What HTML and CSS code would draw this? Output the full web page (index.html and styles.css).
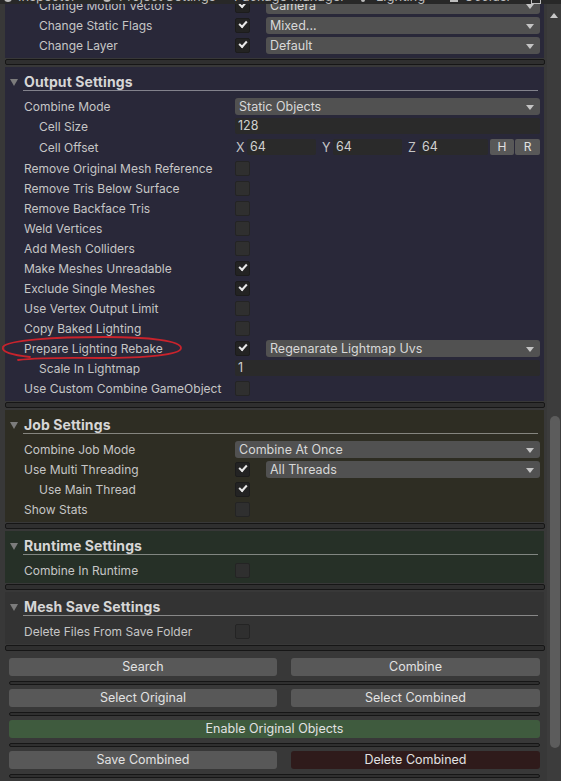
FILE: index.html
```html
<!DOCTYPE html>
<html>
<head>
<meta charset="utf-8">
<link rel="stylesheet" href="styles.css">
</head>
<body>
<div class="window">
  <div class="main">
    <div class="sec sec-navy sec-top">
      <div class="row"><div class="lbl ind">Change Motion Vectors</div><div class="val"><span class="cb on"></span><span class="dd gap">Camera</span></div></div>
      <div class="row"><div class="lbl ind">Change Static Flags</div><div class="val"><span class="cb on"></span><span class="dd gap">Mixed...</span></div></div>
      <div class="row"><div class="lbl ind">Change Layer</div><div class="val"><span class="cb on"></span><span class="dd gap">Default</span></div></div>
    </div>
    <div class="bar"></div>

    <div class="sec sec-navy">
      <div class="hdr"><span class="tri"></span><span class="hdr-t">Output Settings</span></div>
      <div class="row"><div class="lbl">Combine Mode</div><div class="val"><span class="dd">Static Objects</span></div></div>
      <div class="row"><div class="lbl ind">Cell Size</div><div class="val"><span class="fld">128</span></div></div>
      <div class="row row-tall"><div class="lbl ind">Cell Offset</div>
        <div class="val vec">
          <span class="ax ax-x">X</span><span class="fld vf">64</span>
          <span class="ax">Y</span><span class="fld vf">64</span>
          <span class="ax">Z</span><span class="fld vf">64</span>
          <span class="sbtn sbtn-h">H</span><span class="sbtn">R</span>
        </div>
      </div>
      <div class="row"><div class="lbl">Remove Original Mesh Reference</div><div class="val"><span class="cb"></span></div></div>
      <div class="row"><div class="lbl">Remove Tris Below Surface</div><div class="val"><span class="cb"></span></div></div>
      <div class="row"><div class="lbl">Remove Backface Tris</div><div class="val"><span class="cb"></span></div></div>
      <div class="row"><div class="lbl">Weld Vertices</div><div class="val"><span class="cb"></span></div></div>
      <div class="row"><div class="lbl">Add Mesh Colliders</div><div class="val"><span class="cb"></span></div></div>
      <div class="row"><div class="lbl">Make Meshes Unreadable</div><div class="val"><span class="cb on"></span></div></div>
      <div class="row"><div class="lbl">Exclude Single Meshes</div><div class="val"><span class="cb on"></span></div></div>
      <div class="row"><div class="lbl">Use Vertex Output Limit</div><div class="val"><span class="cb"></span></div></div>
      <div class="row"><div class="lbl">Copy Baked Lighting</div><div class="val"><span class="cb"></span></div></div>
      <div class="row"><div class="lbl">Prepare Lighting Rebake</div><div class="val"><span class="cb on"></span><span class="dd gap">Regenarate Lightmap Uvs</span></div></div>
      <div class="row"><div class="lbl ind">Scale In Lightmap</div><div class="val"><span class="fld">1</span></div></div>
      <div class="row"><div class="lbl">Use Custom Combine GameObject</div><div class="val"><span class="cb"></span></div></div>
    </div>
    <div class="bar"></div>

    <div class="sec sec-olive">
      <div class="hdr"><span class="tri"></span><span class="hdr-t">Job Settings</span></div>
      <div class="row"><div class="lbl">Combine Job Mode</div><div class="val"><span class="dd">Combine At Once</span></div></div>
      <div class="row"><div class="lbl">Use Multi Threading</div><div class="val"><span class="cb on"></span><span class="dd gap">All Threads</span></div></div>
      <div class="row"><div class="lbl ind">Use Main Thread</div><div class="val"><span class="cb on"></span></div></div>
      <div class="row"><div class="lbl">Show Stats</div><div class="val"><span class="cb"></span></div></div>
    </div>
    <div class="bar"></div>

    <div class="sec sec-green">
      <div class="hdr"><span class="tri"></span><span class="hdr-t">Runtime Settings</span></div>
      <div class="row"><div class="lbl">Combine In Runtime</div><div class="val"><span class="cb"></span></div></div>
    </div>
    <div class="bar"></div>

    <div class="sec sec-gray">
      <div class="hdr"><span class="tri"></span><span class="hdr-t">Mesh Save Settings</span></div>
      <div class="row"><div class="lbl">Delete Files From Save Folder</div><div class="val"><span class="cb"></span></div></div>
    </div>
    <div class="bar"></div>

    <div class="btns">
      <div class="brow"><span class="btn">Search</span><span class="btn">Combine</span></div>
      <div class="bbar"></div>
      <div class="brow"><span class="btn">Select Original</span><span class="btn">Select Combined</span></div>
      <div class="bbar"></div>
      <div class="brow one"><span class="btn btn-green">Enable Original Objects</span></div>
      <div class="bbar"></div>
      <div class="brow"><span class="btn">Save Combined</span><span class="btn btn-red">Delete Combined</span></div>
      <div class="bbar"></div>
    </div>
  </div>
  <div class="scroll">
    <span class="up"></span>
    <span class="thumb"></span>
  </div>

  <div class="tabs">
    <span class="ico i1"></span><span class="tab t1">Inspector</span>
    <span class="ico i2"></span><span class="tab t2">Project Settings</span>
    <span class="tab t3">Package Manager</span>
    <span class="ico i4"></span><span class="tab t4">Lighting</span>
    <span class="ico i5"></span><span class="tab t5">Occlusi</span>
    <span class="ico i6"></span>
  </div>

  <svg class="mark" width="190" height="30" viewBox="0 0 190 30">
    <path d="M30 21 C12 19 1 16 3 11 C7 4 55 1 105 1 C150 1 181 5 181 12 C181 19 145 22 100 22 C72 22 45 21 18 24" fill="none" stroke="#c8232c" stroke-width="1.8" stroke-linecap="round"/>
  </svg>
</div>
</body>
</html>
```

FILE: styles.css
```css
html, body {
  margin: 0;
  padding: 0;
}
body {
  width: 561px;
  height: 781px;
  overflow: hidden;
  background: #383838;
  font-family: Inter, "Noto Sans", sans-serif;
  font-size: 12px;
  color: #c6c6c6;
}
.window {
  position: relative;
  display: flex;
  width: 561px;
  height: 781px;
  overflow: hidden;
}
.main {
  width: 547px;
  flex: none;
}
.scroll {
  position: relative;
  flex: 1;
  background: #3c3c3c;
}
.up {
  position: absolute;
  left: 3px;
  top: 13px;
  width: 0;
  height: 0;
  border-left: 4px solid transparent;
  border-right: 4px solid transparent;
  border-bottom: 5px solid #c8c8c8;
}
.thumb {
  position: absolute;
  left: 3px;
  top: 416px;
  width: 10px;
  height: 332px;
  border-radius: 5px;
  background: #5c5c5c;
}

.sec {
  margin: 0 3px 0 5px;
  padding-bottom: 3px;
}
.sec-top { margin-top: -5px; }
.sec-navy { background: #292839; }
.sec-olive { background: #2e2d23; }
.sec-green { background: #263027; }
.sec-gray { background: #333333; }

.bar {
  height: 4px;
  margin: 1px 2px 2px 5px;
  border: 1px solid #161616;
  border-radius: 2px;
  background: #2f2f2f;
}

.hdr {
  display: flex;
  align-items: center;
  height: 19px;
  padding-top: 5px;
  margin: 0 6px 5px 0;
  position: relative;
}
.hdr::after {
  content: "";
  position: absolute;
  left: 18px;
  right: 0;
  bottom: 0;
  height: 1px;
  background: rgba(255, 255, 255, 0.42);
}
.tri {
  width: 0;
  height: 0;
  margin: 1px 6px 0 5px;
  border-left: 4px solid transparent;
  border-right: 4px solid transparent;
  border-top: 7px solid #7c7c7c;
}
.hdr-t {
  font-size: 14px;
  font-weight: 700;
  color: #d6d6d6;
  letter-spacing: 0.1px;
}

.row {
  display: grid;
  grid-template-columns: 230px 1fr;
  align-items: center;
  height: 20px;
  padding-right: 4px;
}
.row-tall { height: 22px; }
.lbl {
  padding-left: 19px;
  white-space: nowrap;
}
.lbl.ind { padding-left: 34px; }
.val {
  display: flex;
  align-items: center;
  min-width: 0;
}

.cb {
  position: relative;
  width: 13px;
  height: 13px;
  flex: none;
  border: 1px solid #242424;
  border-radius: 2px;
  background: #2f2f2f;
}
.cb.on { background: #232323; border-color: #1c1c1c; }
.cb.on::after {
  content: "";
  position: absolute;
  left: 3px;
  top: 2px;
  width: 6px;
  height: 3px;
  border-left: 2px solid #e8e8e8;
  border-bottom: 2px solid #e8e8e8;
  transform: rotate(-48deg);
}

.dd {
  position: relative;
  flex: 1;
  height: 17px;
  line-height: 17px;
  padding-left: 4px;
  border-radius: 3px;
  background: #515151;
  color: #d8d8d8;
  font-size: 12.5px;
  white-space: nowrap;
  overflow: hidden;
}
.dd.gap { margin-left: 16px; }
.dd::after {
  content: "";
  position: absolute;
  right: 6px;
  top: 7px;
  width: 0;
  height: 0;
  border-left: 4px solid transparent;
  border-right: 4px solid transparent;
  border-top: 5px solid #c4c4c4;
}

.fld {
  flex: 1;
  height: 16px;
  line-height: 16px;
  padding-left: 3px;
  border-radius: 2px;
  background: #2a2a2a;
  color: #d0d0d0;
  font-size: 12.5px;
}
.vec .ax {
  flex: none;
  width: 11px;
  color: #c6c6c6;
  font-size: 12.5px;
}
.vec .ax-x { width: 12px; padding-left: 1px; box-sizing: border-box; }
.vec .vf {
  flex: none;
  box-sizing: border-box;
  width: 69px;
  margin-right: 6px;
}
.vec .vf:nth-of-type(6) { margin-right: 0; }
.sbtn {
  flex: none;
  width: 24px;
  height: 16px;
  line-height: 16px;
  margin-left: 1px;
  text-align: center;
  background: #585858;
  border-radius: 2px;
  color: #e0e0e0;
  font-size: 12px;
}
.sbtn-h { margin-left: 2px; }
.sbtn:last-child { width: 25px; }

.btns {
  margin: 7px 7px 0 9px;
}
.brow {
  display: grid;
  grid-template-columns: 268px 1fr;
  column-gap: 14px;
}
.brow.one { grid-template-columns: 1fr; }
.btn {
  height: 18px;
  line-height: 18px;
  text-align: center;
  border-radius: 3px;
  background: #585858;
  color: #e2e2e2;
  font-size: 12.5px;
}
.btn-green { background: #3f5b3e; }
.btn-red { background: #2f1b1b; }
.bbar {
  height: 2px;
  margin: 5px 0 4px;
  border: 1px solid #161616;
  border-radius: 2px;
  background: #2f2f2f;
}

.tabs {
  position: absolute;
  left: 0;
  top: 0;
  width: 561px;
  height: 4px;
  overflow: hidden;
  background: #282828;
  font-size: 13px;
  color: #bdbdbd;
}
.tab {
  position: absolute;
  top: -12px;
  white-space: nowrap;
}
.ico {
  position: absolute;
  top: -6px;
  width: 8px;
  height: 8px;
  background: #bdbdbd;
}
.i1 { left: 4px; border-radius: 50%; }
.i2 { left: 103px; border-radius: 50%; }
.i4 { left: 361px; width: 4px; border-radius: 2px; }
.i5 { left: 450px; }
.i6 { left: 531px; width: 8px; background: none; border: 1px solid #bdbdbd; }
.t1 { left: 18px; }
.t2 { left: 119px; }
.t3 { left: 234px; }
.t4 { left: 376px; }
.t5 { left: 464px; }

.mark {
  position: absolute;
  left: 0;
  top: 336px;
}
```
